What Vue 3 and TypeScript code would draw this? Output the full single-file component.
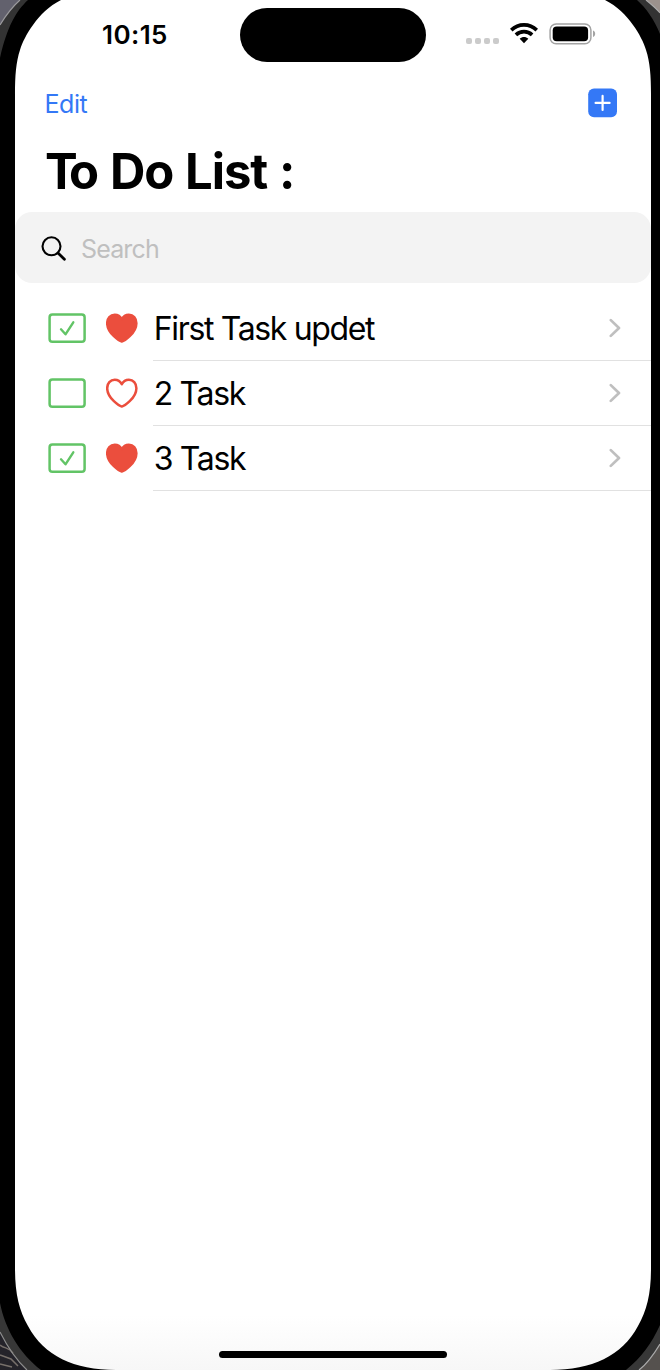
<script setup lang="ts">
import { ref } from 'vue'

interface Task {
  id: number
  title: string
  done: boolean
  liked: boolean
}

const query = ref('')
const tasks = ref<Task[]>([
  { id: 1, title: 'First Task updet', done: true, liked: true },
  { id: 2, title: '2 Task', done: false, liked: false },
  { id: 3, title: '3 Task', done: true, liked: true },
])
</script>

<template>
  <div class="device">
    <svg class="bezel" viewBox="0 0 660 1370" aria-hidden="true">
      <rect width="660" height="1370" fill="#000" />
      <path d="M0 0H28C16 11 7 27 0 58Z" fill="#333" />
      <path d="M0 0H20C12 7 6 15 0 25Z" fill="#62616d" />
      <path d="M20 0C12 7 6 15 0 25" fill="none" stroke="#9b9a9d" stroke-width="1.2" />
      <path d="M660 0H637C646 8 654 19 660 34Z" fill="#333" />
      <path d="M660 0H646C651 4 656 8 660 13Z" fill="#9c928d" />
      <path d="M646 0C651 4 656 8 660 13" fill="none" stroke="#aaa" stroke-width="1.2" />
      <path d="M0 1303C5 1329 20 1354 41 1370H0Z" fill="#373737" />
      <path d="M0 1332C7 1346 15 1359 27 1370H0Z" fill="#24232a" />
      <path d="M0 1345C5 1349 9 1347 13 1353M0 1355L11 1359L18 1366M0 1364L12 1367" fill="none" stroke="#77706b" stroke-width="1.5" />
      <path d="M0 1332C7 1346 15 1359 27 1370" fill="none" stroke="#8d8d8d" stroke-width="1.2" />
      <path d="M660 1325C652 1343 641 1358 626 1370H660Z" fill="#373737" />
      <path d="M660 1344C654 1354 648 1363 639 1370H660Z" fill="#55514e" />
      <path d="M660 1344C654 1354 648 1363 639 1370" fill="none" stroke="#aaa" stroke-width="1.2" />
      <defs>
        <linearGradient id="screenFill" x1="0" y1="0" x2="0" y2="1">
          <stop offset="0.96" stop-color="#fff" />
          <stop offset="1" stop-color="#f7f7f7" />
        </linearGradient>
      </defs>
      <path
        d="M61 0C49 6 40 15 33 25C27 33 22 43 20 50C16 62 15 76 15 94V1268C15 1294 19 1310 28 1326C44 1356 74 1370 116 1370H550C592 1370 622 1356 638 1326C647 1310 651 1294 651 1268V94C651 76 650 62 646 50C644 43 639 33 633 25C626 15 617 6 605 0Z"
        fill="url(#screenFill)"
      />
    </svg>

    <main class="screen">
      <header class="status">
        <span class="clock">10:15</span>
        <span class="island"></span>
        <span class="signals">
          <span class="dots"><i v-for="n in 4" :key="n"></i></span>
          <svg class="wifi" width="28" height="21" viewBox="0 0 28 21">
            <g fill="none" stroke="#000" stroke-width="3.7">
              <path d="M1.2 7.1C8.4.1 19.6.1 26.8 7.1" />
              <path d="M5.9 11.9C10.5 7.6 17.5 7.6 22.1 11.9" />
            </g>
            <path d="M9.7 15.8C12.2 13.5 15.8 13.5 18.3 15.8L14 20.2Z" />
          </svg>
          <svg class="battery" width="47" height="22" viewBox="0 0 47 22">
            <rect x="1.1" y="1" width="40.8" height="19.8" rx="6" fill="none" stroke="#a3a3a3" stroke-width="1.5" />
            <rect x="3.7" y="3.4" width="35.4" height="14.9" rx="4" />
            <path d="M44 7.5C46.9 8.5 46.9 13 44 14Z" fill="#a3a3a3" />
          </svg>
        </span>
      </header>

      <nav class="toolbar">
        <a class="edit">Edit</a>
        <svg class="add" width="30" height="30" viewBox="0 0 30 30">
          <rect x=".2" y=".5" width="28.8" height="28.8" rx="5.8" fill="#3478f6" />
          <path d="M14.6 7.9V21.9M7.6 14.9H21.6" stroke="#fff" stroke-width="2.2" stroke-linecap="round" />
        </svg>
      </nav>

      <h1 class="title"><span class="kern">T</span>o Do List :</h1>

      <label class="search">
        <svg width="26" height="26" viewBox="0 0 26 26" fill="none" stroke="#000">
          <circle cx="10.5" cy="10.3" r="9" stroke-width="2.1" />
          <path d="M17 17L23.4 23.3" stroke-width="2.8" stroke-linecap="round" />
        </svg>
        <input v-model="query" type="text" placeholder="Search" />
      </label>

      <ul class="tasks">
        <li v-for="task in tasks" :key="task.id" class="task">
          <svg class="check" width="38" height="30" viewBox="0 0 38 30" fill="none" stroke="#62c466" stroke-width="2.5">
            <rect x="1.6" y="1.5" width="35" height="27.2" rx="2.8" />
            <path v-if="task.done" d="M13 16.3L17.5 21.3L25.3 9.3" stroke-width="2.4" stroke-linecap="round" stroke-linejoin="round" />
          </svg>
          <svg class="heart" width="32" height="31" viewBox="0 0 32 31">
            <path
              d="M15.8 28.6C14.2 28.2 1.2 20.6 1.2 10.2C1.2 5.3 4.4 1.8 8.7 1.8C12 1.8 14.4 3.5 15.8 6.3C17.2 3.5 19.6 1.8 22.9 1.8C27.2 1.8 30.4 5.3 30.4 10.2C30.4 20.6 17.4 28.2 15.8 28.6Z"
              :fill="task.liked ? '#eb4e3d' : 'none'"
              stroke="#eb4e3d"
              stroke-width="2.5"
              stroke-linejoin="round"
            />
          </svg>
          <div class="body">
            <span class="name">{{ task.title }}</span>
            <svg width="12" height="20" viewBox="0 0 12 20" fill="none">
              <path d="M1.8 2.1L10 10L1.8 17.9" stroke="#bfbfbf" stroke-width="2.7" stroke-linecap="round" stroke-linejoin="round" />
            </svg>
          </div>
        </li>
      </ul>

      <div class="home"></div>
    </main>
  </div>
</template>

<style>
body {
  margin: 0;
  background: #000;
}
</style>

<style scoped>
.device {
  position: relative;
  box-sizing: border-box;
  width: 660px;
  height: 1370px;
  padding: 0 9px 0 15px;
  overflow: hidden;
  font-family: Inter, "Liberation Sans", sans-serif;
  color: #000;
}
.bezel {
  position: absolute;
  inset: 0;
  width: 660px;
  height: 1370px;
}
.screen {
  position: relative;
  display: flex;
  flex-direction: column;
  height: 1370px;
}
.status {
  display: grid;
  grid-template-columns: 225px 186px 225px;
  height: 70px;
}
.clock {
  padding: 18px 0 0 87px;
  font-size: 26px;
  font-weight: 600;
  line-height: 34px;
  letter-spacing: 0.4px;
}
.island {
  height: 54px;
  margin-top: 8px;
  border-radius: 27px;
  background: #000;
}
.signals {
  display: flex;
  align-items: flex-start;
  padding-left: 40px;
}
.dots {
  display: flex;
  gap: 3px;
  padding-top: 38px;
  margin-right: 11px;
}
.dots i {
  width: 6px;
  height: 6px;
  border-radius: 2px;
  background: #cbcbcb;
}
.wifi {
  margin-top: 23px;
}
.battery {
  margin: 23px 0 0 11px;
}
.toolbar {
  display: flex;
  align-items: center;
  justify-content: space-between;
  height: 66px;
  padding: 0 33px 0 29.5px;
}
.edit {
  padding-top: 2px;
  color: #3478f6;
  font-size: 25px;
  line-height: 32px;
  letter-spacing: -0.45px;
}
.title {
  height: 76px;
  margin: 0;
  padding-left: 30px;
  font-size: 49px;
  font-weight: 700;
  line-height: 71px;
  letter-spacing: -1.1px;
  word-spacing: 1.4px;
  white-space: nowrap;
}
.kern {
  letter-spacing: -8.6px;
}
.search {
  display: flex;
  box-sizing: border-box;
  align-items: center;
  gap: 14px;
  height: 71px;
  padding: 2px 0 0 26px;
  border-radius: 17px;
  background: #f3f3f3;
}
.search input {
  flex: 1;
  min-width: 0;
  padding: 0;
  border: 0;
  outline: 0;
  background: none;
  font: 25px/32px Inter, "Liberation Sans", sans-serif;
  letter-spacing: -0.85px;
}
.search input::placeholder {
  color: #bfbfbf;
  opacity: 1;
}
.tasks {
  margin: 13px 0 0;
  padding: 0;
  list-style: none;
}
.task {
  display: flex;
  align-items: center;
  height: 65px;
  padding-left: 33px;
}
.check {
  margin-bottom: 2px;
}
.heart {
  margin: 0 15px 0 20px;
}
.body {
  display: flex;
  flex: 1;
  align-items: center;
  justify-content: space-between;
  align-self: stretch;
  padding: 0 30px 0 0.8px;
  border-bottom: 1px solid #e1e1e1;
}
.name {
  padding-top: 2px;
  font-size: 32px;
  line-height: 40px;
  letter-spacing: -1.35px;
  white-space: nowrap;
}
.home {
  width: 228px;
  height: 7px;
  margin: auto auto 12px 204px;
  border-radius: 4px;
  background: #000;
}
</style>
